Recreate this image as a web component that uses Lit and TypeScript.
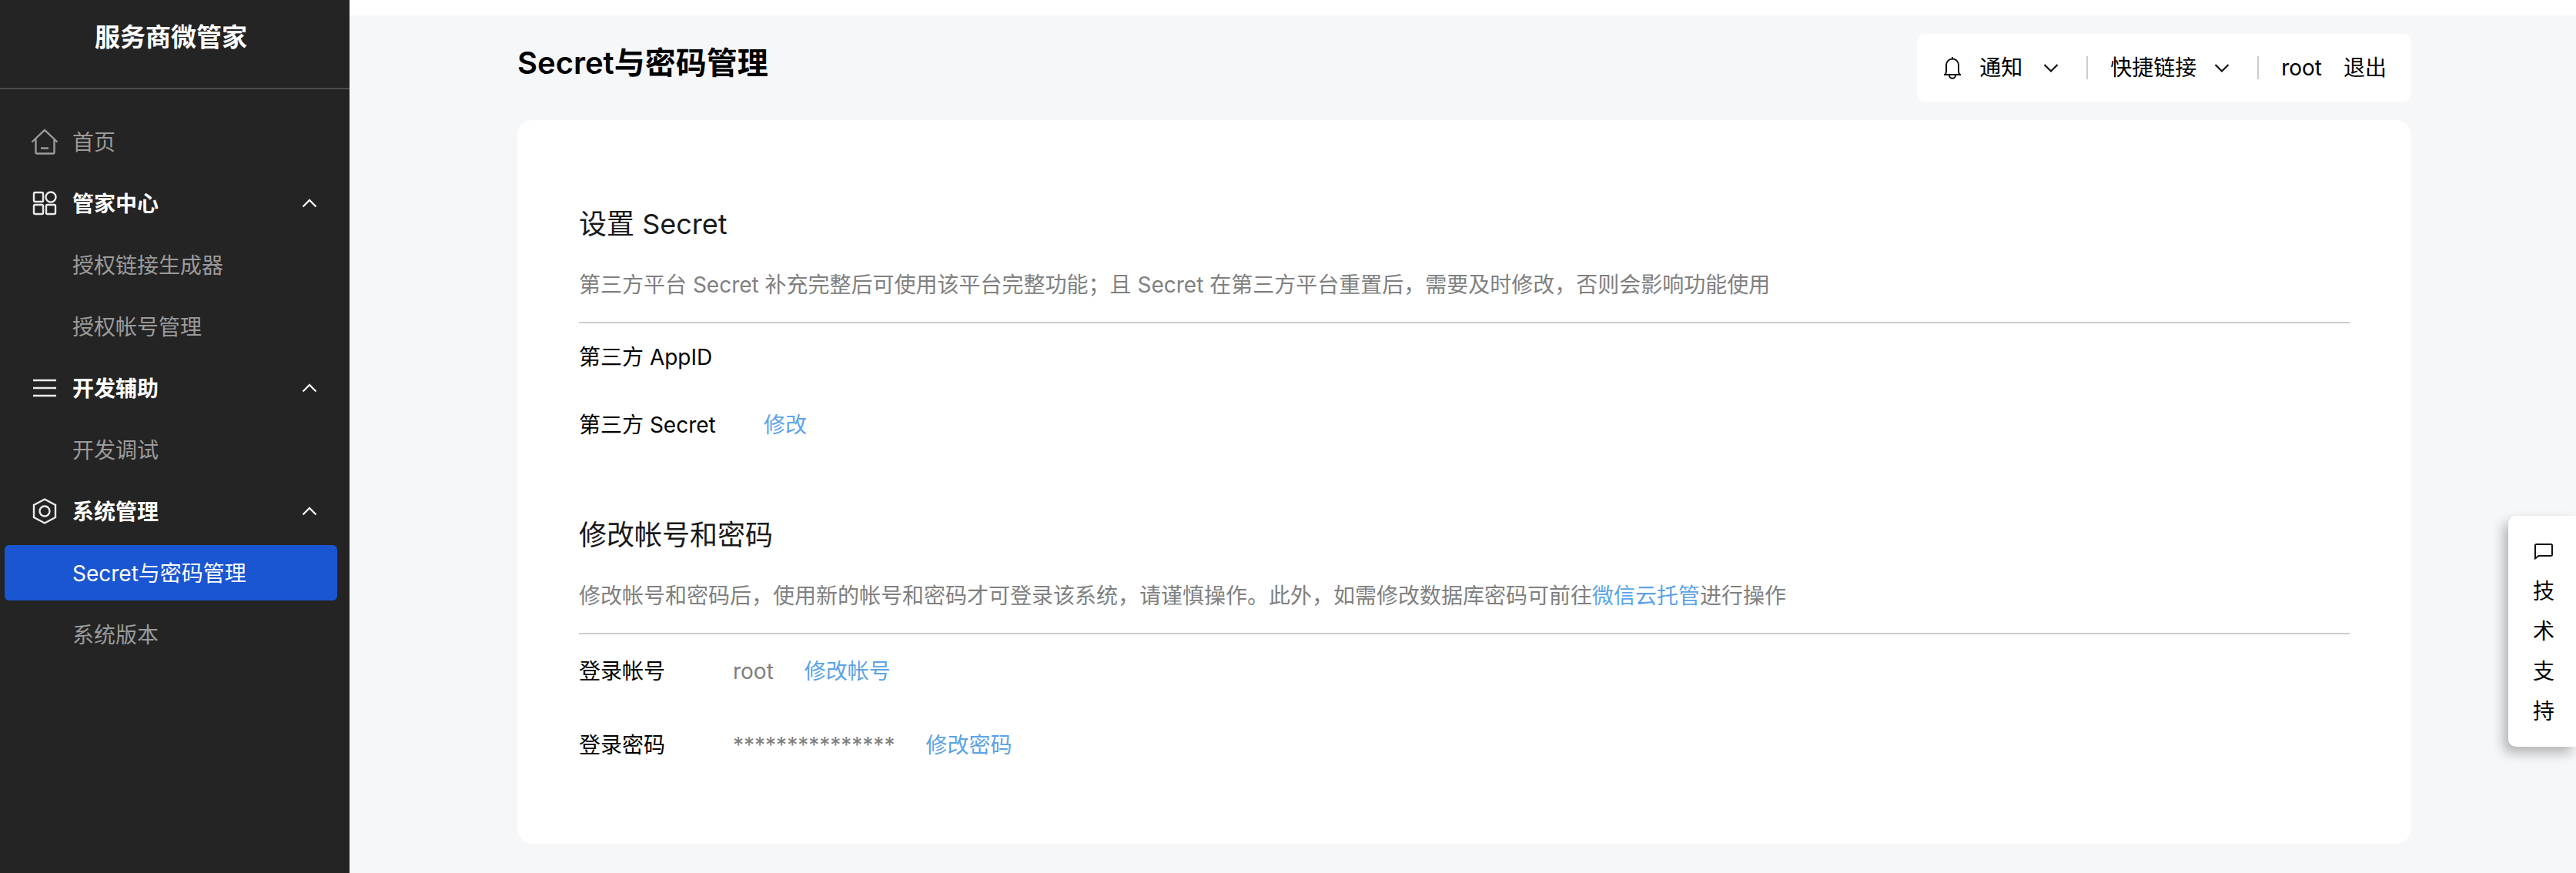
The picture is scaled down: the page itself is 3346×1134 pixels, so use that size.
import { LitElement, html, css, svg } from "lit";
import { customElement } from "lit/decorators.js";
import { classMap } from "lit/directives/class-map.js";

const FONT = css`Inter, "Noto Sans CJK SC", sans-serif`;

const icons = {
  home: svg`<path d="M1.5 18.500 18 3l16.500 15.500M6.500 14.500V32a1.500 1.500 0 0 0 1.500 1.500h21a1.500 1.500 0 0 0 1.500-1.500V14.500M13 26.500h10"/>`,
  grid: svg`<rect x="4" y="4" width="12" height="12" rx="1.5"/><circle cx="26" cy="10" r="6.5"/><rect x="4" y="20" width="12" height="12" rx="1.5"/><rect x="20" y="20" width="12" height="12" rx="1.5"/>`,
  list: svg`<path d="M3 8h30M3 18h30M3 28h30"/>`,
  hex: svg`<path d="M18 2.500 32 10v16l-14 7.500L4 26V10z"/><circle cx="18" cy="18" r="6.5"/>`,
};

interface Item {
  label: string;
  icon?: keyof typeof icons;
  group?: boolean;
  active?: boolean;
}

const MENU: Item[] = [
  { label: "首页", icon: "home" },
  { label: "管家中心", icon: "grid", group: true },
  { label: "授权链接生成器" },
  { label: "授权帐号管理" },
  { label: "开发辅助", icon: "list", group: true },
  { label: "开发调试" },
  { label: "系统管理", icon: "hex", group: true },
  { label: "Secret与密码管理", active: true },
  { label: "系统版本" },
];

@customElement("side-menu")
export class SideMenu extends LitElement {
  static styles = css`
    :host { display: block; width: 454px; flex: none; background: #242424; color: #9b9b9b; font-family: ${FONT}; }
    .brand { box-sizing: border-box; height: 116px; padding: 22px 10px 0 0; border-bottom: 2px solid #4d4d4d;
      color: #fff; font-size: 33px; font-weight: 700; line-height: 52px; text-align: center; }
    .list { display: flex; flex-direction: column; gap: 8px; margin: 0; padding: 32px 16px 0 6px; list-style: none; }
    .item { display: flex; align-items: center; gap: 18px; box-sizing: border-box; width: 100%; height: 72px;
      padding: 0 24px 0 34px; border: 0; border-radius: 6px; background: none; color: inherit;
      font: 400 28px/40px ${FONT}; text-align: left; text-decoration: none; }
    .group { color: #fff; font-weight: 700; }
    .active { color: #fff; background: #1a56d2; }
    .icon { width: 36px; height: 36px; flex: none; fill: none; stroke: currentColor; stroke-width: 2.4; }
    .group .icon { stroke: #ebebeb; }
    .label { flex: 1; padding-top: 1px; }
    .arrow { width: 24px; height: 24px; fill: none; stroke: #f0f0f0; stroke-width: 2.4; }
  `;

  row(i: Item) {
    const body = html`
      <svg class="icon" viewBox="0 0 36 36" aria-hidden="true">${i.icon ? icons[i.icon] : ""}</svg>
      <span class="label">${i.label}</span>
      ${i.group ? html`<svg class="arrow" viewBox="0 0 24 24" aria-hidden="true"><path d="M3.500 16.500 12 8l8.500 8.500"/></svg>` : ""}`;
    return i.group
      ? html`<button class="item group" type="button" aria-expanded="true">${body}</button>`
      : html`<a class=${classMap({ item: true, active: !!i.active })} href="#">${body}</a>`;
  }

  render() {
    return html`
      <div class="brand">服务商微管家</div>
      <nav><ul class="list">${MENU.map((i) => html`<li>${this.row(i)}</li>`)}</ul></nav>`;
  }
}

@customElement("user-bar")
export class UserBar extends LitElement {
  static styles = css`
    :host { display: flex; align-items: center; box-sizing: border-box; height: 88px; padding: 0 32px;
      border-radius: 10px; background: #fff; color: #000; }
    .drop, .plain { display: flex; align-items: center; padding: 0; border: 0; background: none; color: inherit;
      font: 400 28px/40px ${FONT}; }
    .bell { width: 28px; height: 32px; margin-right: 21px; fill: none; stroke: #111; stroke-width: 2; }
    .text { min-width: 60px; text-align: left; }
    .arrow { width: 24px; height: 24px; margin-left: 21px; fill: none; stroke: #111; stroke-width: 2.2; }
    .bar { width: 2px; height: 30px; margin: 0 29px 0 34px; background: #ccc; }
    .exit { margin-left: 28px; text-decoration: none; }
  `;

  render() {
    const arrow = html`<svg class="arrow" viewBox="0 0 24 24" aria-hidden="true"><path d="M3.500 8 12 16.500 20.500 8"/></svg>`;
    return html`
      <button class="drop" type="button">
        <svg class="bell" viewBox="0 0 28 32" aria-hidden="true"><path d="M14 2v3M4.500 24.500Q6 23 6 21v-8.500a8 8 0 0 1 16 0V21q0 2 1.500 3.500M3 25h22M10 26a4 3.800 0 0 0 8 0"/></svg>
        <span class="text">通知</span>${arrow}
      </button>
      <span class="bar"></span>
      <button class="drop" type="button"><span class="text">快捷链接</span>${arrow}</button>
      <span class="bar"></span>
      <span class="plain">root</span>
      <a class="plain exit" href="#">退出</a>`;
  }
}

@customElement("app-root")
export class AppRoot extends LitElement {
  static styles = css`
    :host { display: flex; min-height: 100vh; background: #f6f7f9; color: #000; font: 400 28px/40px ${FONT}; }
    .page { flex: 1; min-width: 0; border-top: 20px solid #fff; }
    .body { padding: 24px 214px 38px 218px; }
    .head { display: flex; justify-content: space-between; align-items: flex-start; margin-bottom: 24px; }
    .title { margin: 10px 0 0; font-size: 40px; font-weight: 600; line-height: 56px; }
    .card { display: flex; flex-direction: column; gap: 74px; padding: 110px 80px 80px; border-radius: 20px; background: #fff; }
    .name { margin: 0 0 34px; color: #1a1a1a; font-size: 36px; font-weight: 400; line-height: 50px; }
    .desc { margin: 0; padding-bottom: 28px; border-bottom: 2px solid #ccc; color: #808080; }
    .rows { margin: 0; }
    .row { display: flex; align-items: center; height: 88px; }
    .tall .row { height: 96px; }
    .key { min-width: 240px; }
    .tall .key { min-width: 200px; }
    .val { display: flex; gap: 40px; margin: 0; color: #808080; }
    .link { padding: 0; border: 0; background: none; color: #5ba3e6; font: inherit; text-decoration: none; }
    .support { position: absolute; right: 0; top: 670px; display: flex; flex-direction: column; align-items: center;
      width: 88px; padding: 20px 28px 20px 32px; border: 0; border-radius: 10px 0 0 10px; background: #fff; color: #000;
      box-shadow: -6px 8px 16px rgba(0, 0, 0, 0.28); font: 400 28px/52px ${FONT}; }
    .chat { display: block; width: 28px; height: 52px; fill: none; stroke: #111; stroke-width: 2; }
  `;

  render() {
    return html`
      <side-menu></side-menu>
      <main class="page">
        <div class="body">
          <header class="head"><h1 class="title">Secret与密码管理</h1><user-bar></user-bar></header>
          <div class="card">
            <section>
              <h2 class="name">设置 Secret</h2>
              <p class="desc">第三方平台 Secret 补充完整后可使用该平台完整功能；且 Secret 在第三方平台重置后，需要及时修改，否则会影响功能使用</p>
              <dl class="rows">
                <div class="row"><dt class="key">第三方 AppID</dt></div>
                <div class="row"><dt class="key">第三方 Secret</dt><dd class="val"><button class="link" type="button">修改</button></dd></div>
              </dl>
            </section>
            <section class="tall">
              <h2 class="name">修改帐号和密码</h2>
              <p class="desc">修改帐号和密码后，使用新的帐号和密码才可登录该系统，请谨慎操作。此外，如需修改数据库密码可前往<a class="link" href="#">微信云托管</a>进行操作</p>
              <dl class="rows">
                <div class="row"><dt class="key">登录帐号</dt><dd class="val"><span>root</span><button class="link" type="button">修改帐号</button></dd></div>
                <div class="row"><dt class="key">登录密码</dt><dd class="val"><span>***************</span><button class="link" type="button">修改密码</button></dd></div>
              </dl>
            </section>
          </div>
        </div>
      </main>
      <button class="support" type="button">
        <svg class="chat" viewBox="0 0 28 52" aria-hidden="true"><path d="M3 35.500V18.500a1.500 1.500 0 0 1 1.500-1.500h19a1.500 1.500 0 0 1 1.500 1.500v12a1.500 1.500 0 0 1-1.500 1.500H7.500z"/></svg>
        <span>技</span><span>术</span><span>支</span><span>持</span>
      </button>`;
  }
}
